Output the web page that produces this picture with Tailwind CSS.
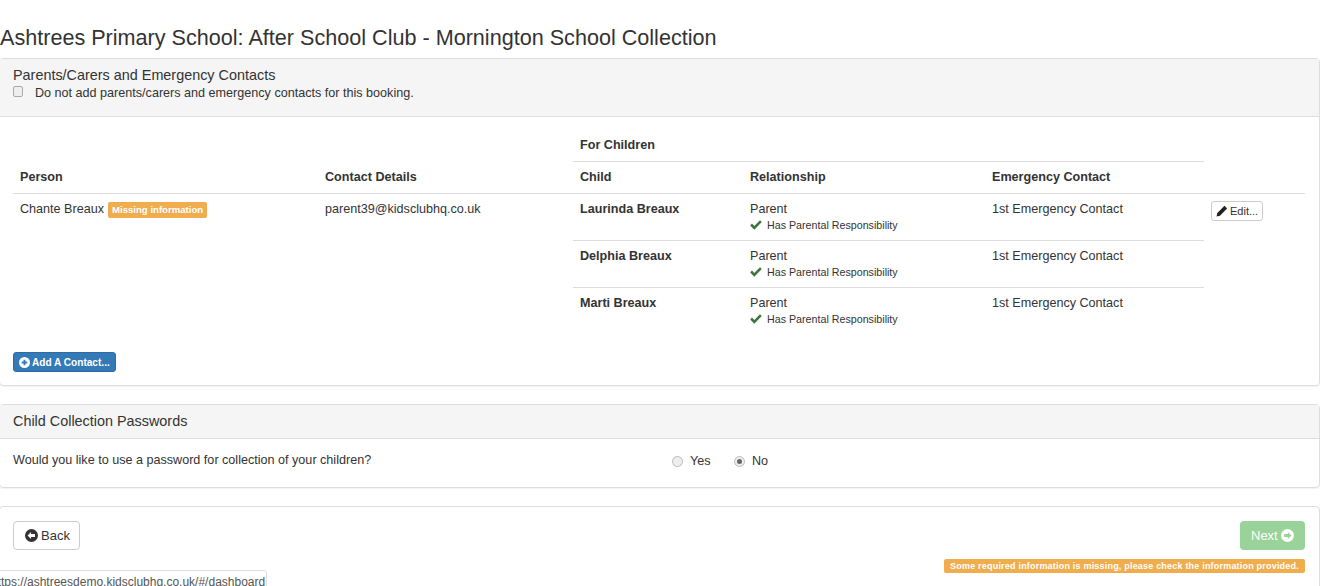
<!DOCTYPE html>
<html lang="en" class="overflow-hidden">
<head>
  <meta charset="UTF-8" />
  <title>Ashtrees Primary School: After School Club</title>
  <script src="https://cdn.jsdelivr.net/npm/@tailwindcss/browser@4"></script>
</head>
<body class="relative h-[586px] overflow-hidden bg-white font-['Liberation_Sans',Arial,sans-serif] text-[12.6px] leading-[17px] text-[#333]">

  <h1 class="pt-[25px] h-[58px] text-[21.6px] leading-[26px] text-[#333]">Ashtrees Primary School: After School Club - Mornington School Collection</h1>

  <!-- Parents / carers panel -->
  <section class="ml-[-1px] w-[1321px] h-[328px] border border-[#ddd] rounded-[4px] shadow-[0_1px_1px_rgba(0,0,0,0.05)]">
    <div class="h-[58px] bg-[#f5f5f5] border-b border-[#ddd] pl-[13px] pt-[8px]">
      <h3 class="text-[14.4px] leading-[16px]">Parents/Carers and Emergency Contacts</h3>
      <label class="flex items-center h-[18px] mt-[1px]">
        <input type="checkbox" class="appearance-none w-[10px] h-[11px] mt-[-3px] bg-[#eee] border border-[#aaa] rounded-[2px]" />
        <span class="ml-[12px]">Do not add parents/carers and emergency contacts for this booking.</span>
      </label>
    </div>

    <div class="ml-[13px] w-[1292px]">
      <div class="flex h-[76px]">
        <div class="w-[305px] pl-[7px] pt-[52px] font-bold">Person</div>
        <div class="w-[255px] pl-[7px] pt-[52px] font-bold">Contact Details</div>
        <div class="w-[631px]">
          <div class="h-[45px] pl-[7px] pt-[20px] font-bold border-b border-[#ddd]">For Children</div>
          <div class="flex pt-[7px] font-bold">
            <div class="w-[170px] pl-[7px]">Child</div>
            <div class="w-[242px] pl-[7px]">Relationship</div>
            <div class="pl-[7px]">Emergency Contact</div>
          </div>
        </div>
      </div>

      <div class="flex border-t border-[#ddd]">
        <div class="w-[305px] pl-[7px] pt-[7px] flex items-start">
          <span>Chante Breaux</span>
          <span class="ml-[4px] mt-[1px] h-[16px] px-[4px] bg-[#f0ad4e] rounded-[2px] text-white text-[9.6px] leading-[15px] font-bold">Missing information</span>
        </div>
        <div class="w-[255px] pl-[7px] pt-[7px]">parent39@kidsclubhq.co.uk</div>
        <div class="w-[631px]">
          <div class="flex h-[47px] pt-[7px] border-b border-[#ddd]">
            <div class="w-[170px] pl-[7px] font-bold">Laurinda Breaux</div>
            <div class="w-[242px] pl-[7px]">
              <div>Parent</div>
              <div class="flex items-center text-[10.7px] leading-[14px]">
                <svg class="w-[12px] h-[10px] mr-[5px]" viewBox="0 0 12 10"><path d="M0.2 5.4 2 3.6 4.3 5.9 10 0.2 11.8 2 4.3 9.8Z" fill="#3c763d"/></svg>
                Has Parental Responsibility
              </div>
            </div>
            <div class="pl-[7px]">1st Emergency Contact</div>
          </div>
          <div class="flex h-[47px] pt-[7px] border-b border-[#ddd]">
            <div class="w-[170px] pl-[7px] font-bold">Delphia Breaux</div>
            <div class="w-[242px] pl-[7px]">
              <div>Parent</div>
              <div class="flex items-center text-[10.7px] leading-[14px]">
                <svg class="w-[12px] h-[10px] mr-[5px]" viewBox="0 0 12 10"><path d="M0.2 5.4 2 3.6 4.3 5.9 10 0.2 11.8 2 4.3 9.8Z" fill="#3c763d"/></svg>
                Has Parental Responsibility
              </div>
            </div>
            <div class="pl-[7px]">1st Emergency Contact</div>
          </div>
          <div class="flex h-[47px] pt-[7px]">
            <div class="w-[170px] pl-[7px] font-bold">Marti Breaux</div>
            <div class="w-[242px] pl-[7px]">
              <div>Parent</div>
              <div class="flex items-center text-[10.7px] leading-[14px]">
                <svg class="w-[12px] h-[10px] mr-[5px]" viewBox="0 0 12 10"><path d="M0.2 5.4 2 3.6 4.3 5.9 10 0.2 11.8 2 4.3 9.8Z" fill="#3c763d"/></svg>
                Has Parental Responsibility
              </div>
            </div>
            <div class="pl-[7px]">1st Emergency Contact</div>
          </div>
        </div>
        <div class="pl-[7px] pt-[7px]">
          <button class="flex items-center w-[52px] h-[20px] border border-[#ccc] rounded-[3px] pl-[4px] text-[11px]">
            <svg class="w-[12px] h-[12px] mr-[2px]" viewBox="0 0 11 11"><path d="M0.5 10.5 1.2 7.4 7.8 0.8 10.2 3.2 3.6 9.8Z" fill="#222"/></svg>
            Edit...
          </button>
        </div>
      </div>

      <button class="flex items-center mt-[17px] h-[20px] w-[103px] bg-[#337ab7] border border-[#2e6da4] rounded-[3px] pl-[5px] text-white text-[10.1px] font-bold">
        <svg class="w-[11px] h-[11px] mr-[2px]" viewBox="0 0 12 12"><path fill-rule="evenodd" d="M6 0a6 6 0 1 0 0 12A6 6 0 0 0 6 0ZM5 3h2v2h2v2H7v2H5V7H3V5h2Z" fill="#fff"/></svg>
        Add A Contact...
      </button>
    </div>
  </section>

  <!-- Collection passwords panel -->
  <section class="ml-[-1px] mt-[18px] w-[1321px] h-[84px] border border-[#ddd] rounded-[4px] shadow-[0_1px_1px_rgba(0,0,0,0.05)]">
    <div class="h-[34px] bg-[#f5f5f5] border-b border-[#ddd] pl-[13px] pt-[8px] text-[14.4px] leading-[16px]">Child Collection Passwords</div>
    <div class="flex pl-[13px] pt-[13px]">
      <p class="w-[659px]">Would you like to use a password for collection of your children?</p>
      <label class="flex items-center h-[18px] w-[62px]">
        <span class="w-[11px] h-[11px] rounded-full border border-[#bbb] bg-[#eee]"></span>
        <span class="ml-[7px]">Yes</span>
      </label>
      <label class="flex items-center h-[18px]">
        <span class="flex items-center justify-center w-[11px] h-[11px] rounded-full border border-[#bbb] bg-[#eee]">
          <span class="w-[5px] h-[5px] rounded-full bg-[#666]"></span>
        </span>
        <span class="ml-[7px]">No</span>
      </label>
    </div>
  </section>

  <!-- Navigation panel -->
  <section class="ml-[-1px] mt-[18px] w-[1321px] h-[120px] border border-[#ddd] rounded-[4px] pl-[13px] pr-[14px] pt-[14px]">
    <div class="flex justify-between">
      <button class="flex items-center w-[67px] h-[29px] border border-[#ccc] rounded-[4px] pl-[11px] text-[13px]">
        <svg class="w-[13px] h-[13px] mr-[3px]" viewBox="0 0 12 12"><path fill-rule="evenodd" d="M6 0a6 6 0 1 0 0 12A6 6 0 0 0 6 0ZM5.6 2.8V4.7H9.2V7.3H5.6V9.2L2.4 6Z" fill="#333"/></svg>
        Back
      </button>
      <button class="flex items-center w-[65px] h-[29px] bg-[#99d399] rounded-[4px] pl-[11px] text-white text-[13px]">
        Next
        <svg class="w-[13px] h-[13px] ml-[3px]" viewBox="0 0 12 12"><path fill-rule="evenodd" d="M6 0a6 6 0 1 0 0 12A6 6 0 0 0 6 0ZM6.4 2.8 9.6 6 6.4 9.2V7.3H2.8V4.7H6.4Z" fill="#fff"/></svg>
      </button>
    </div>
    <div class="flex justify-end mt-[9px]">
      <span class="w-[361px] h-[14px] bg-[#f0ad4e] rounded-[2px] text-center text-white text-[9px] leading-[14px] font-bold tracking-[0.2px]">Some required information is missing, please check the information provided.</span>
    </div>
  </section>

  <!-- Browser status bubble -->
  <div class="absolute left-[-16px] top-[570px] w-[283px] h-[20px] pl-[6px] pt-[3px] bg-white border border-[#ddd] rounded-[3px] text-[12px] text-[#555] whitespace-nowrap">https://ashtreesdemo.kidsclubhq.co.uk/#/dashboard</div>
</body>
</html>
